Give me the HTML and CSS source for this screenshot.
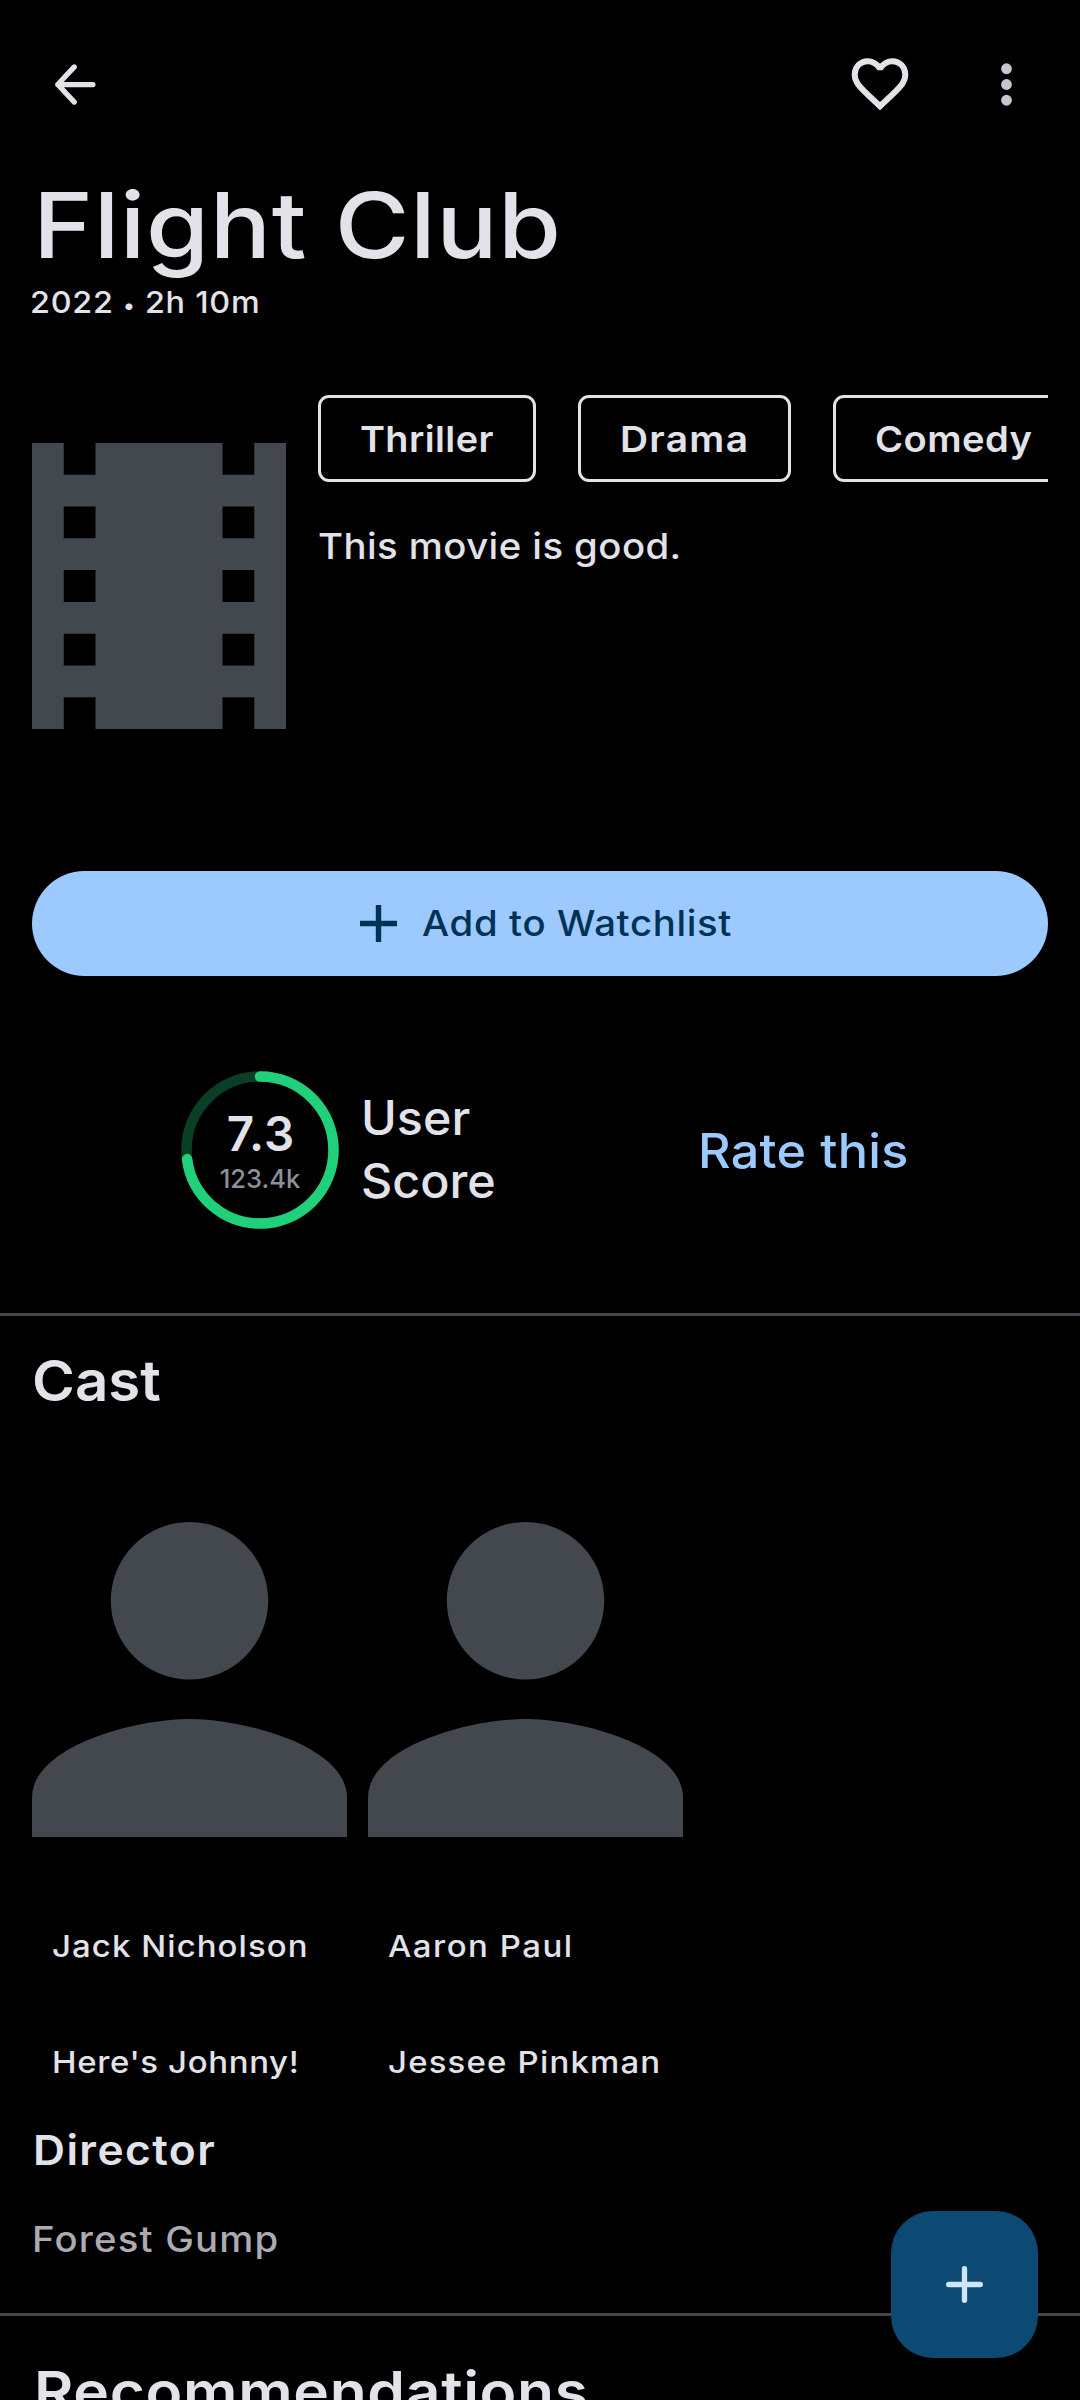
FILE: index.html
```html
<!DOCTYPE html>
<html lang="en">
<head>
<meta charset="utf-8">
<title>Flight Club</title>
<link rel="stylesheet" href="styles.css">
</head>
<body>
<main class="screen">
  <header class="topbar">
    <svg class="back" viewBox="0 0 24 24"><path d="M19.400 12H6M12.300 5.300L6 12l6.300 6.700"/></svg>
    <svg class="heart" viewBox="0 4.500 64 64"><path d="M32 20C29 15.500 24.500 12.700 19.500 12.700C12.300 12.700 6.700 18.500 6.700 26C6.700 36 16 42.500 32 57.700C48 42.500 57.300 36 57.300 26C57.300 18.500 51.700 12.700 44.500 12.700C39.500 12.700 35 15.500 32 20Z"/></svg>
    <svg class="more" viewBox="0 0 24 24"><circle cx="12" cy="6" r="2.050"/><circle cx="12" cy="12" r="2.050"/><circle cx="12" cy="18" r="2.050"/></svg>
  </header>
  <h1 class="title">Flight Club</h1>
  <p class="meta">2022 <span class="dot">•</span> 2h 10m</p>
  <section class="overview">
    <svg class="film" viewBox="0 0 8 9" preserveAspectRatio="none"><path d="M0 0h1v1h1V0h4v1h1V0h1v9H7V8H6v1H2V8H1v1H0zM1 2v1h1V2zM1 4v1h1V4zM1 6v1h1V6zM6 2v1h1V2zM6 4v1h1V4zM6 6v1h1V6z"/></svg>
    <div class="info">
      <div class="chips">
        <div class="chip thriller"><span>Thriller</span></div>
        <div class="chip drama"><span>Drama</span></div>
        <div class="chip comedy"><span>Comedy</span></div>
      </div>
      <p class="plot">This movie is good.</p>
    </div>
  </section>
  <button class="watch"><svg viewBox="0 0 37 37"><path d="M18.500 0v37M0 18.500h37"/></svg><span>Add to Watchlist</span></button>
  <section class="ratings">
    <div class="ring">
      <svg viewBox="0 0 158 158"><circle class="track" cx="79" cy="79" r="73.500"/><circle class="arc" cx="79" cy="79" r="73.500" pathLength="100" transform="rotate(-90 79 79)"/></svg>
      <div class="score"><b>7.3</b><small>123.4k</small></div>
    </div>
    <p class="label">User<br>Score</p>
    <p class="rate">Rate this</p>
  </section>
  <hr>
  <h2 class="cast-title">Cast</h2>
  <section class="cast">
    <article>
      <svg viewBox="4 4 16 16"><circle cx="12" cy="8" r="4"/><path d="M12 14c-2.670 0-8 1.340-8 4v2h16v-2c0-2.660-5.330-4-8-4z"/></svg>
      <p class="actor jack">Jack Nicholson</p>
      <p class="role johnny">Here's Johnny!</p>
    </article>
    <article>
      <svg viewBox="4 4 16 16"><circle cx="12" cy="8" r="4"/><path d="M12 14c-2.670 0-8 1.340-8 4v2h16v-2c0-2.660-5.330-4-8-4z"/></svg>
      <p class="actor aaron">Aaron Paul</p>
      <p class="role jessee">Jessee Pinkman</p>
    </article>
  </section>
  <h3 class="director">Director</h3>
  <p class="person">Forest Gump</p>
  <hr>
  <h2 class="recs">Recommendations</h2>
  <button class="fab" aria-label="Add"><svg viewBox="0 0 37 37"><path d="M18.500 2.700v31.600M2.700 18.500h31.600"/></svg></button>
</main>
</body>
</html>
```
FILE: styles.css
```css
* { box-sizing: border-box; margin: 0; padding: 0; }
body { background: #000; color: #e2e2e9; font-family: Inter, "Open Sans", sans-serif; font-weight: 450; }
svg { display: block; flex: none; }
button { border: 0; font-family: inherit; }

.screen { position: relative; width: 1080px; height: 2400px; overflow: hidden; display: flex; flex-direction: column; }
.screen > * { flex: none; }

.title, .meta, .chip span, .plot, .watch span, .label, .rate, .cast-title, .cast p, .director, .person, .recs { transform: scaleX(1.08); transform-origin: 0 0; }

.topbar { height: 169px; padding: 0 42px; display: flex; align-items: center; }
.back { width: 63px; height: 63px; margin-right: auto; fill: none; stroke: #e2e2e9; stroke-width: 2; stroke-linecap: round; stroke-linejoin: round; }
.heart { width: 64px; height: 64px; margin-right: 63px; fill: none; stroke: #e2e2e9; stroke-width: 6; stroke-miterlimit: 1.6; }
.more { width: 63px; height: 63px; fill: #c3c7cf; }

.title { align-self: flex-start; margin-left: 33px; font-size: 91px; line-height: 113px; font-weight: 450; letter-spacing: 0.5px; transform: scaleX(1.12); }
.meta { align-self: flex-start; margin-left: 30px; font-size: 30.5px; line-height: 40px; letter-spacing: 0.7px; transform: scaleX(1.06); }
.dot { font-size: 21px; line-height: 1; }

.overview { display: flex; height: 381px; margin: 73px 32px 0; gap: 32px; }
.film { width: 254px; height: 286px; margin-top: 47.5px; fill: #43474e; }
.info { flex: 1; min-width: 0; }
.chips { display: flex; gap: 42px; overflow: hidden; }
.chip { flex: none; height: 87px; padding-left: 39px; border: 3px solid #e2e2e9; border-radius: 11px; font-size: 36px; line-height: 82px; font-weight: 600; }
.chip span { display: inline-block; }
.thriller { width: 218px; letter-spacing: 0.4px; }
.thriller span { transform: scaleX(1.05); }
.drama { width: 213px; letter-spacing: 1.2px; }
.comedy { width: 242px; letter-spacing: 0.4px; }
.comedy span { transform: scaleX(1.06); }
.plot { width: max-content; margin-top: 41px; font-size: 35.5px; line-height: 48px; letter-spacing: 0.4px; }

.watch { height: 105px; margin: 95px 32px 0; padding: 0 0 0 328px; display: flex; align-items: center; gap: 25px; border-radius: 53px; background: #9ccaff; color: #003256; font-size: 35.5px; font-weight: 450; letter-spacing: 0.6px; }
.watch svg { width: 37px; height: 37px; stroke: #003256; stroke-width: 5.4; }

.ratings { display: flex; height: 158px; margin: 94.5px 0 84.5px; padding-left: 181px; }
.ring { display: grid; width: 158px; height: 158px; }
.ring > * { grid-area: 1 / 1; }
.ring circle { fill: none; stroke-width: 10.5; }
.track { stroke: #0a3e25; }
.arc { stroke: #21d07a; stroke-dasharray: 73 100; stroke-linecap: round; }
.score { display: flex; flex-direction: column; align-items: center; padding: 35px 0 0 2px; }
.score b { font-size: 47.5px; line-height: 56px; font-weight: 600; letter-spacing: 1px; }
.score small { margin: 2px 2px 0 0; font-size: 25.5px; line-height: 30px; color: #8e9099; }
.label { width: 337px; margin: 15px 0 0 22px; font-size: 47.5px; line-height: 63px; font-weight: 550; letter-spacing: 0; transform: scaleX(1.02); }
.rate { margin-top: 48.5px; font-size: 47.5px; line-height: 63px; font-weight: 550; letter-spacing: 0.3px; color: #9ccaff; transform: scaleX(1.06); }

hr { height: 3px; border: 0; background: #43474e; }

.cast-title { margin: 30px 0 0 32px; font-size: 56px; line-height: 70px; font-weight: 600; transform: scaleX(1.04); }
.cast { display: flex; gap: 21px; margin-top: 105.5px; padding-left: 32px; }
.cast article { width: 315px; font-size: 30.5px; line-height: 42px; white-space: nowrap; }
.cast svg { width: 315px; height: 315px; fill: #43474e; }
.cast p { margin-left: 20px; }
.actor { margin-top: 88px; }
.role { margin-top: 74px; }
.jack { letter-spacing: 1px; }
.johnny { letter-spacing: 0.6px; }
.aaron { letter-spacing: 1.4px; }
.jessee { letter-spacing: 1.1px; }

.director { margin: 42.5px 0 0 33px; font-size: 41px; line-height: 50px; font-weight: 600; letter-spacing: 1.3px; }
.person { margin: 43px 0 51px 32px; font-size: 35.5px; line-height: 44px; letter-spacing: 1.1px; color: #ababb1; }
.recs { margin: 41px 0 0 34px; font-size: 56px; line-height: 70px; font-weight: 600; letter-spacing: 0.6px; }

.fab { position: absolute; right: 42px; bottom: 42px; width: 147px; height: 147px; display: grid; place-items: center; border-radius: 42px; background: #0d4a73; }
.fab svg { width: 37px; height: 37px; stroke: #d0e4ff; stroke-width: 5.3; stroke-linecap: round; }
```
